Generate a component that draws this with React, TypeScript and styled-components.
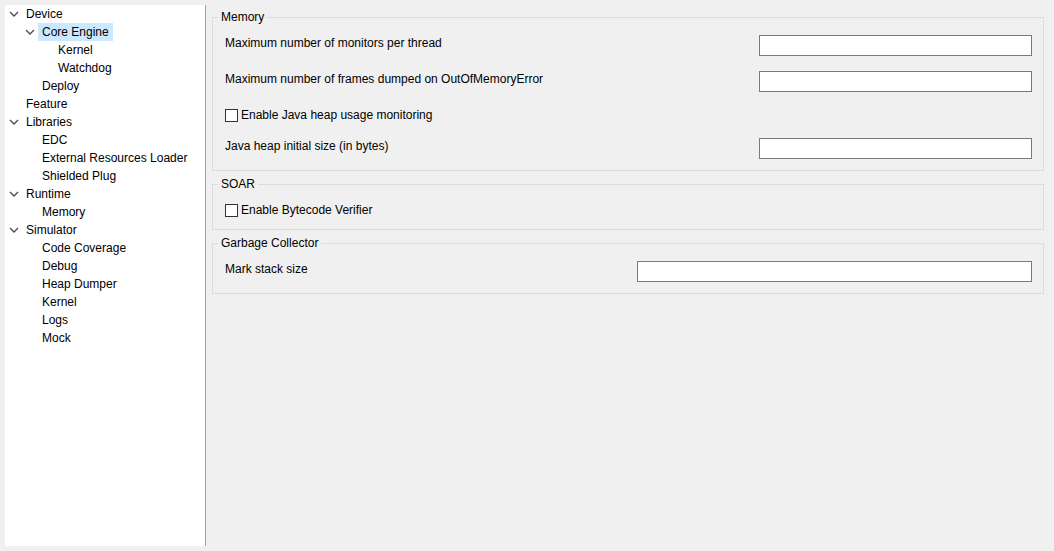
import React from 'react';
import styled, { createGlobalStyle } from 'styled-components';

const GlobalStyle = createGlobalStyle`
  html, body { margin: 0; padding: 0; background: #f0f0f0; }
  body {
    font-family: "Segoe UI", "Liberation Sans", Arial, sans-serif;
    font-size: 12px;
    color: #000;
  }
  * { box-sizing: border-box; }
`;

const Window = styled.div`
  display: flex;
  height: 551px;
  padding: 5px;
  background: #f0f0f0;
`;

const TreePanel = styled.div`
  width: 201px;
  flex: none;
  background: #fff;
  border-right: 1px solid #a0a0a0;
  padding-left: 1px;
  display: flex;
  flex-direction: column;
`;

const TreeRow = styled.div<{ $level: number }>`
  display: flex;
  align-items: center;
  height: 18px;
  padding-left: ${(p) => p.$level * 16}px;
`;

const Toggle = styled.span`
  width: 16px;
  height: 18px;
  flex: none;
  display: flex;
  align-items: center;
  justify-content: center;
  color: #4a4a4a;
`;

const TreeLabel = styled.span<{ $selected?: boolean }>`
  height: 18px;
  line-height: 18px;
  padding: 0 4px;
  white-space: nowrap;
  background: ${(p) => (p.$selected ? '#cce8ff' : 'transparent')};
`;

const Content = styled.div`
  flex: 1;
  min-width: 0;
  padding: 5px 5px 0 6px;
  display: flex;
  flex-direction: column;
  gap: 6px;
`;

const Group = styled.fieldset`
  margin: 0;
  min-width: 0;
  border: 1px solid #dcdcdc;
  padding: 11px 11px 11px 12px;
`;

const Legend = styled.legend`
  padding: 0 3px;
  margin-left: -7px;
  line-height: 14px;
  height: 14px;
`;

const FormGrid = styled.div<{ $field: number }>`
  display: grid;
  grid-template-columns: 1fr ${(p) => p.$field}px;
  row-gap: 15px;
  align-items: start;
`;

const FieldLabel = styled.span`
  line-height: 16px;
  white-space: nowrap;
`;

const TextField = styled.div`
  height: 21px;
  border: 1px solid #7a7a7a;
  background: #fff;
`;

const CheckRow = styled.label`
  grid-column: 1 / -1;
  display: flex;
  align-items: center;
  gap: 3px;
  height: 16px;
  line-height: 16px;
`;

const CheckBox = styled.span`
  width: 13px;
  height: 13px;
  flex: none;
  border: 1px solid #333;
  background: #fff;
`;

const Chevron = () => (
  <svg width="10" height="6" viewBox="0 0 10 6">
    <polyline points="1,1 5,5 9,1" fill="none" stroke="currentColor" strokeWidth="1.3" />
  </svg>
);

type Node = { label: string; level: number; expanded?: boolean; selected?: boolean };

const tree: Node[] = [
  { label: 'Device', level: 0, expanded: true },
  { label: 'Core Engine', level: 1, expanded: true, selected: true },
  { label: 'Kernel', level: 2 },
  { label: 'Watchdog', level: 2 },
  { label: 'Deploy', level: 1 },
  { label: 'Feature', level: 0 },
  { label: 'Libraries', level: 0, expanded: true },
  { label: 'EDC', level: 1 },
  { label: 'External Resources Loader', level: 1 },
  { label: 'Shielded Plug', level: 1 },
  { label: 'Runtime', level: 0, expanded: true },
  { label: 'Memory', level: 1 },
  { label: 'Simulator', level: 0, expanded: true },
  { label: 'Code Coverage', level: 1 },
  { label: 'Debug', level: 1 },
  { label: 'Heap Dumper', level: 1 },
  { label: 'Kernel', level: 1 },
  { label: 'Logs', level: 1 },
  { label: 'Mock', level: 1 },
];

export default function App() {
  return (
    <>
      <GlobalStyle />
      <Window>
        <TreePanel>
          {tree.map((n, i) => (
            <TreeRow key={i} $level={n.level}>
              <Toggle>{n.expanded ? <Chevron /> : null}</Toggle>
              <TreeLabel $selected={n.selected}>{n.label}</TreeLabel>
            </TreeRow>
          ))}
        </TreePanel>
        <Content>
          <Group>
            <Legend>Memory</Legend>
            <FormGrid $field={273}>
              <FieldLabel>Maximum number of monitors per thread</FieldLabel>
              <TextField />
              <FieldLabel>Maximum number of frames dumped on OutOfMemoryError</FieldLabel>
              <TextField />
              <CheckRow>
                <CheckBox />
                Enable Java heap usage monitoring
              </CheckRow>
              <FieldLabel>Java heap initial size (in bytes)</FieldLabel>
              <TextField />
            </FormGrid>
          </Group>
          <Group>
            <Legend>SOAR</Legend>
            <FormGrid $field={273}>
              <CheckRow>
                <CheckBox />
                Enable Bytecode Verifier
              </CheckRow>
            </FormGrid>
          </Group>
          <Group>
            <Legend>Garbage Collector</Legend>
            <FormGrid $field={395}>
              <FieldLabel>Mark stack size</FieldLabel>
              <TextField />
            </FormGrid>
          </Group>
        </Content>
      </Window>
    </>
  );
}
